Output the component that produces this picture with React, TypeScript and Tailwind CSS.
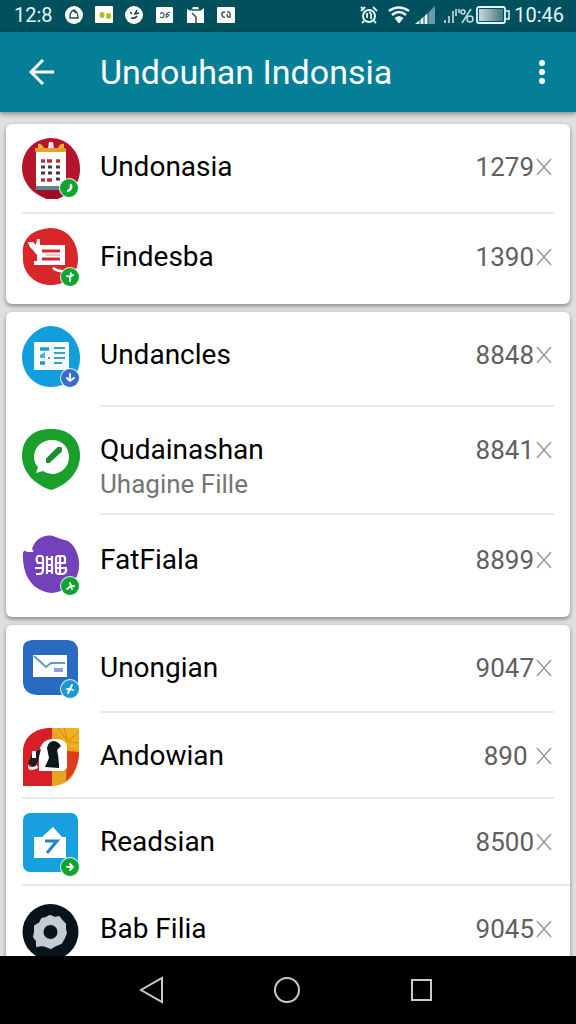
import { useState, type ReactNode } from "react"

type Item = {
  name: string
  detail?: string
  count: string
  icon: ReactNode
  rowClass: string
  iconClass?: string
  dividerClass?: string
}

function Badge({ cx, cy, color = "#0fa42d", children }: { cx: number; cy: number; color?: string; children: ReactNode }) {
  return (
    <g transform={`translate(${cx} ${cy})`}>
      <circle r="10" fill="#e4f4f0" />
      <circle r="9" fill={color} />
      <g stroke="#fff" strokeWidth="1.800" fill="none" strokeLinecap="round" strokeLinejoin="round">
        {children}
      </g>
    </g>
  )
}

function AppIcon({ children }: { children: ReactNode }) {
  return (
    <svg viewBox="0 0 58 64" className="w-[58px] h-16" aria-hidden="true">
      {children}
    </svg>
  )
}

const calendarIcon = (
  <AppIcon>
    <path d="M28 0C45 0 58 13 58 31C58 48 46 61 29 61C14 60 0 46 0 30C0 13 12 1 28 0Z" fill="#b5142d" />
    <path d="M14 50H44V56L36 61H24L14 53Z" fill="#9d0c22" />
    <rect x="14" y="12" width="30" height="40" fill="#fff" />
    <rect x="13" y="10" width="31" height="4" rx="1" fill="#e5a02e" />
    <path d="M16 10V6Q19 5 22 10ZM36 10Q38 5 42 6V10Z" fill="#f2ad34" />
    <path d="M26 10L27 4H31L32 10Z" fill="#e9e3f4" />
    <rect x="14" y="48" width="30" height="4" fill="#58898f" />
    <path d="M19 23h4M25 23h5M34 23h4M19 42h4M25 42h5" stroke="#b8323c" strokeWidth="3.500" />
    <path d="M19 29h4M26 29h4M34 29h4M19 35h4M26 35h4M34 35h4M34 41h4" stroke="#46383c" strokeWidth="3" />
    <Badge cx={47} cy={50}>
      <path d="M2-3Q3 1-1 3" strokeWidth="2.500" />
    </Badge>
  </AppIcon>
)

const cartIcon = (
  <AppIcon>
    <path d="M28 0C46 0 56 14 56 31C56 47 44 57 29 57C13 57 0 45 1 29C-1 12 8 2 28 0Z" fill="#d9262b" />
    <path d="M6 14L11 14L14 17L15 11H18V17H43V37H12V33H15V27L11 22Q7 19 6 14Z" fill="#fff" />
    <path d="M20 23H38M20 31H38" stroke="#d9262b" strokeWidth="3" />
    <path d="M24 27H38" stroke="#e5868a" strokeWidth="1" />
    <path d="M31 40Q36 44 43 43" stroke="#fff" strokeWidth="2.500" fill="none" />
    <Badge cx={48} cy={49}>
      <path d="M-3-1L0 0L3-2M1-4L0 0V4" />
    </Badge>
  </AppIcon>
)

const newsIcon = (
  <AppIcon>
    <path d="M28 0C46 0 58 16 58 32C58 50 45 61 29 61C13 61 0 48 0 31C0 15 14 1 28 0Z" fill="#129edc" />
    <rect x="12" y="16" width="35" height="28" rx="1" fill="#f4fbfd" />
    <path d="M18 23H27M18 37H23" stroke="#2296cf" strokeWidth="3.500" />
    <path d="M18 29L23 26V32H18Z" fill="#48b1d8" />
    <path d="M32 22H43M32 27H43M32 32H43M32 37H40M26 32H28" stroke="#3b9fc8" strokeWidth="2" />
    <Badge cx={48} cy={52} color="#3a6cc8">
      <path d="M0-4V3M-3 0L0 3L4 0" />
    </Badge>
  </AppIcon>
)

const chatIcon = (
  <AppIcon>
    <path d="M29 0C47 0 58 10 58 27C58 42 46 56 29 61C13 56 0 43 0 27C0 10 11 0 29 0Z" fill="#1a9f2b" />
    <path d="M30 11C40 11 47 18 47 28S39 45 30 45Q25 45 21 42L14 44L16 38Q12 34 12 28C12 18 20 11 30 11Z" fill="#fff" />
    <path d="M25 30L36 19L39 19V22L27 33H25Z" fill="#1a9030" stroke="#1a9030" strokeWidth="2" strokeLinejoin="round" />
  </AppIcon>
)

const gridIcon = (
  <AppIcon>
    <path d="M10 14C13 4 22-1 31 1Q38 4 46 6C54 11 58 23 57 32C56 47 44 57 29 58C12 56 0 43 1 18Q2 14 5 17H11Q12 16 10 14Z" fill="#7441bd" />
    <g fill="none" stroke="#fff" strokeWidth="2.200" strokeLinejoin="round">
      <path d="M15 21H19Q21 21 21 24V35Q21 39 17 39H14M16 21Q13 24 16 28H21M13 33H22M25 21V39M25 24H29M24 30H31M25 36H29M30 21V39" />
      <path d="M36 21H41Q43 21 43 24V28H34V24Q34 21 36 21M34 33H44V36Q43 39 40 39H37Q34 39 34 36V28M38 21V39" />
    </g>
    <Badge cx={48} cy={51}>
      <path d="M0-3L1 0L4 0M1 0L-3 3M1 0L2 3" />
    </Badge>
  </AppIcon>
)

const mailIcon = (
  <AppIcon>
    <path d="M10 1H46Q56 2 56 12V48Q55 56 47 56H15Q1 55 1 42V9Q1 2 10 1Z" fill="#2a6bc2" />
    <rect x="11" y="16" width="34" height="22" fill="#fff" />
    <path d="M12 17L24 28L29 24H43" stroke="#5e9dca" strokeWidth="2" fill="none" />
    <path d="M32 31H41" stroke="#8aa2d8" strokeWidth="4" />
    <Badge cx={48} cy={50} color="#1b9acb">
      <path d="M2-4L0 0L-3 0M0 0L3 1M0 0L-2 4" />
    </Badge>
  </AppIcon>
)

const penguinIcon = (
  <AppIcon>
    <path d="M29 1H57V23C57 45 48 59 29 59H1V25C1 10 13 1 29 1Z" fill="#e8a322" />
    <path d="M29 1H30V59H1V25C1 10 13 1 29 1Z" fill="#d81f28" />
    <path d="M45 24L57 25C57 38 51 49 44 54Z" fill="#dd3b22" />
    <path d="M31 1H57V23L45 18Z" fill="#f0b21e" />
    <path d="M36 1L46 15L42 1M46 15L56 5M47 15L57 16" stroke="#e0981a" strokeWidth="1.500" fill="none" />
    <path d="M17 44V26Q19 12 31 12Q45 11 45 21V41L41 44Z" fill="#fff" />
    <path d="M23 40L27 31L25 21Q26 15 31 14Q36 14 39 19L35 23Q37 30 37 41Z" fill="#0c171a" />
    <path d="M11 24H15L19 22L16 34L13 40L6 37Z" fill="#191e22" />
    <path d="M10 24V31H14V24ZM6 37Q8 43 15 38L16 41Q8 45 6 41Z" fill="#fff" />
  </AppIcon>
)

const readerIcon = (
  <AppIcon>
    <rect x="1" y="0" width="55" height="59" rx="7" fill="#179fdf" />
    <path d="M12 24H20L31 14L40 24H44V45H12Z" fill="#fff" />
    <path d="M23 28H35L25 40" stroke="#2385c2" strokeWidth="3" fill="none" />
    <Badge cx={48} cy={54}>
      <path d="M-3 0H3M0-3L3 0L0 3" />
    </Badge>
  </AppIcon>
)

const gearIcon = (
  <AppIcon>
    <circle cx="28.500" cy="28" r="28" fill="#09131d" />
    <path d="M28 12L33 14L37 13L40 17L43 20L43 25L44 29L42 34L39 39L34 41L29 44L24 42L20 41L15 42L15 37L12 33L13 28L13 22L18 19L20 15L24 14Z" fill="#c6cad3" stroke="#c6cad3" strokeWidth="2" strokeLinejoin="round" />
    <circle cx="28.500" cy="28" r="7" fill="#09131d" />
  </AppIcon>
)

const groups: Item[][] = [
  [
    { name: "Undonasia", count: "1279", icon: calendarIcon, rowClass: "h-[90px] pt-3.5", dividerClass: "mx-4" },
    { name: "Findesba", count: "1390", icon: cartIcon, rowClass: "h-[90px] pt-3.5" },
  ],
  [
    { name: "Undancles", count: "8848", icon: newsIcon, rowClass: "h-[95px] pt-3.5", dividerClass: "ml-[94px] mr-4" },
    { name: "Qudainashan", detail: "Uhagine Fille", count: "8841", icon: chatIcon, rowClass: "h-[108px] pt-3.5", iconClass: "pt-2", dividerClass: "ml-[94px] mr-4" },
    { name: "FatFiala", count: "8899", icon: gridIcon, rowClass: "h-[102px] pt-4", iconClass: "pt-1" },
  ],
  [
    { name: "Unongian", count: "9047", icon: mailIcon, rowClass: "h-[88px] pt-3.5", dividerClass: "ml-[94px] mr-4" },
    { name: "Andowian", count: "890\u00a0", icon: penguinIcon, rowClass: "h-[86px] pt-3.5", dividerClass: "mx-4" },
    { name: "Readsian", count: "8500", icon: readerIcon, rowClass: "h-[87px] pt-3.5", dividerClass: "ml-4" },
    { name: "Bab Filia", count: "9045", icon: gearIcon, rowClass: "h-[90px] pt-3.5", iconClass: "pt-1" },
  ],
]

function StatusBar() {
  return (
    <div className="flex h-8 shrink-0 items-center justify-between bg-[#00505e] pl-3.5 pr-3 pb-0.5 text-xl leading-none text-[#e4f6f8]">
      <div className="flex items-center gap-3">
        <span>12:8</span>
        <svg viewBox="0 0 171 20" className="w-[171px] h-5" fill="#fff" aria-hidden="true">
          <circle cx="9" cy="10" r="9" />
          <path d="M5 13Q5 6 9 5Q13 7 13 13ZM8 5L11 8" fill="none" stroke="#174d57" strokeWidth="1.300" />
          <rect x="30" y="1" width="18" height="17" rx="1" />
          <ellipse cx="37" cy="10" rx="2.500" ry="3" fill="#b5bd19" />
          <ellipse cx="43.500" cy="11" rx="2.500" ry="3" fill="#c3b51c" />
          <circle cx="69" cy="10" r="9" />
          <path d="M65 7L67 9M72 5L70 9L74 8M66 13Q70 14 72 11" stroke="#17363c" strokeWidth="1.500" fill="none" />
          <rect x="91" y="2" width="17" height="16" rx="1" />
          <path d="M95 9Q99 6 99 10T95 12M105 7Q101 8 101 11T104 10L101 9" stroke="#39585f" strokeWidth="1.200" fill="none" />
          <path d="M122 4L126 6L128 2H133L135 6L139 3V18H122Z" />
          <path d="M127 8L131 12V18M127 5H135" stroke="#26525b" strokeWidth="1.500" fill="none" />
          <rect x="152" y="2" width="18" height="16" rx="1" />
          <path d="M160 7Q156 7 157 10T160 12M162 7Q166 6 165 12Q162 13 162 9" stroke="#29444b" strokeWidth="1.300" fill="none" />
        </svg>
      </div>
      <div className="flex items-center gap-1">
        <svg viewBox="0 0 150 20" className="w-[150px] h-5" fill="none" stroke="#e8f8fa" aria-hidden="true">
          <circle cx="9" cy="11" r="6" strokeWidth="2" />
          <path d="M7 8V13M9 7Q12 8 11 14M1 6L5 2M13 2L17 6M4 16L2 18M14 16L16 18M1 2L4 5" strokeWidth="1.800" />
          <path d="M29 6Q38.500-1 49 6" strokeWidth="2.500" />
          <path d="M32 10Q39 4 46 10" strokeWidth="2.500" />
          <path d="M35 13Q39 10 43 13L39 18Z" fill="#e8f8fa" strokeWidth="1" />
          <path d="M55 19L68 8V19Z" fill="#e8f8fa" stroke="none" />
          <path d="M68 8L75 1V19H68Z" fill="#6c9ba5" stroke="none" />
          <path d="M60 11V19M64 9V19M68 6V19" stroke="#00505e" strokeWidth="1" />
          <path d="M85 18V15M89 18V11M93 18V6M96 11V4M99 8V4" stroke="#9fc5cb" strokeWidth="2" />
          <circle cx="103" cy="7" r="2" stroke="#c5dfe3" strokeWidth="1.500" />
          <circle cx="110" cy="14" r="3" stroke="#c5dfe3" strokeWidth="1.500" />
          <path d="M111 4L102 18" stroke="#c5dfe3" strokeWidth="1.500" />
          <rect x="117" y="2" width="28" height="16" rx="2" strokeWidth="1.800" />
          <defs>
            <linearGradient id="charge">
              <stop stopColor="#c9d9dd" />
              <stop offset="1" stopColor="#437681" />
            </linearGradient>
          </defs>
          <rect x="119" y="4" width="24" height="12" fill="url(#charge)" stroke="none" />
          <path d="M146 6H149V14H146" strokeWidth="1.500" />
        </svg>
        <span>10:46</span>
      </div>
    </div>
  )
}

function Header() {
  return (
    <header className="relative flex h-20 shrink-0 items-center bg-[#047f97] px-4 text-white shadow-[0_2px_5px_rgba(0,0,0,0.4)]">
      <button className="flex size-12 items-center justify-center" aria-label="Back">
        <svg viewBox="0 0 28 28" className="size-7" fill="none" stroke="currentColor" strokeWidth="3">
          <path d="M28 14H5M17 2L5 14L17 26" />
        </svg>
      </button>
      <h1 className="ml-9 flex-1 text-[34px] leading-10">Undouhan Indonsia</h1>
      <button className="flex h-12 w-9 items-center justify-center" aria-label="More options">
        <svg viewBox="0 0 8 28" className="h-7 w-2" fill="currentColor">
          <circle cx="4" cy="5" r="3" />
          <circle cx="4" cy="14" r="3" />
          <circle cx="4" cy="23" r="3" />
        </svg>
      </button>
    </header>
  )
}

function Row({ item, onRemove }: { item: Item; onRemove: () => void }) {
  return (
    <li className={`flex flex-col justify-between ${item.rowClass}`}>
      <div className="flex h-0 items-start px-4">
        <div className={item.iconClass}>{item.icon}</div>
        <div className="ml-5 flex-1 pt-[11px]">
          <p className="text-[28px] leading-9 text-black">{item.name}</p>
          {item.detail && <p className="text-[26px] leading-8 text-[#757575]">{item.detail}</p>}
        </div>
        <span className="pt-[11px] text-[26px] leading-9 text-[#606060]">{item.count}</span>
        <button className="mt-[11px] flex h-9 w-5 items-center justify-center text-[#949494]" aria-label={`Remove ${item.name}`} onClick={onRemove}>
          <svg viewBox="0 0 16 18" className="h-[18px] w-4" fill="none" stroke="currentColor" strokeWidth="1.400">
            <path d="M1 1L15 17M15 1L1 17" />
          </svg>
        </button>
      </div>
      {item.dividerClass && <hr className={`border-t-2 border-[#e8eaea] ${item.dividerClass}`} />}
    </li>
  )
}

export default function App() {
  const [removed, setRemoved] = useState<string[]>([])

  return (
    <div className="flex h-screen flex-col overflow-hidden bg-[#dedfe0] font-[Roboto,sans-serif]">
      <StatusBar />
      <Header />

      {/* Download groups */}
      <main className="flex min-h-0 flex-1 flex-col gap-2 overflow-hidden px-1.5 pt-3">
        {groups.map((group, index) => (
          <ul key={index} className="shrink-0 rounded-md bg-white shadow-[0_2px_4px_rgba(0,0,0,0.4)]">
            {group
              .filter((item) => !removed.includes(item.name))
              .map((item) => (
                <Row key={item.name} item={item} onRemove={() => setRemoved([...removed, item.name])} />
              ))}
          </ul>
        ))}
      </main>

      {/* System navigation */}
      <nav className="relative flex h-[68px] shrink-0 items-center justify-center gap-[87px] bg-black text-[#c9c9c9]">
        <button className="flex size-12 items-center justify-center" aria-label="System back">
          <svg viewBox="0 0 28 28" className="size-7" fill="none" stroke="currentColor" strokeWidth="2">
            <path d="M23 2V26L2 14Z" />
          </svg>
        </button>
        <button className="flex size-12 items-center justify-center" aria-label="Home">
          <svg viewBox="0 0 28 28" className="size-7" fill="none" stroke="currentColor" strokeWidth="2">
            <circle cx="13" cy="14" r="12" />
          </svg>
        </button>
        <button className="flex size-12 items-center justify-center" aria-label="Recent apps">
          <svg viewBox="0 0 28 28" className="size-7" fill="none" stroke="currentColor" strokeWidth="2">
            <rect x="3" y="4" width="19" height="20" />
          </svg>
        </button>
      </nav>
    </div>
  )
}
